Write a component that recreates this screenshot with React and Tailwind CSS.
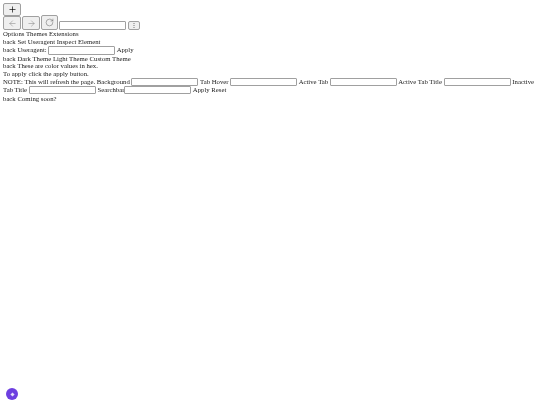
import React from 'react';
import { Plus, ArrowLeft, ArrowRight, RotateCw } from 'lucide-react';

const NavButton = ({ children, className = '' }) => (
  <button className={`inline-flex items-center justify-center rounded-[2px] border border-[#a0a0a0] bg-[#efefef] text-[#333] ${className}`}>
    {children}
  </button>
);

const Field = ({ className = '' }) => (
  <input type="text" className={`inline-block h-[8px] w-[67px] rounded-[1px] border border-[#a0a0a0] bg-white align-top ${className}`} />
);

export default function App() {
  return (
    <div className="relative h-[405px] w-[540px] overflow-hidden bg-white font-['Liberation_Serif',serif] text-[6.75px] leading-[7.75px] text-[#222] [will-change:transform]">
      <div className="px-[3px] pt-[3px]">
        <div className="flex">
          <NavButton className="h-[13px] w-[18px]"><Plus size={9} strokeWidth={1.75} className="text-black" /></NavButton>
        </div>
        <div className="flex h-[14px] items-end">
          <NavButton className="mr-[1px] h-[14px] w-[18px]"><ArrowLeft size={9} strokeWidth={1.25} className="text-[#777]" /></NavButton>
          <NavButton className="mr-[1px] h-[14px] w-[18px]"><ArrowRight size={9} strokeWidth={1.25} className="text-[#777]" /></NavButton>
          <NavButton className="mr-[1px] h-[15px] w-[17px]"><RotateCw size={9} strokeWidth={1.25} className="text-[#555]" /></NavButton>
          <Field className="h-[9px]" />
          <NavButton className="ml-[2px] h-[9px] w-[12px] text-[6px]">⋮</NavButton>
        </div>
        <div>Options Themes Extensions</div>
        <div>back Set Useragent Inspect Element</div>
        <div className="leading-[8.5px]">back Useragent: <Field className="h-[9px]" /> Apply</div>
        <div>back Dark Theme Light Theme Custom Theme</div>
        <div>back These are color values in hex.</div>
        <div>To apply click the apply button.</div>
        <div className="leading-[8.5px]">
          NOTE: This will refresh the page. Background <Field /> Tab Hover <Field /> Active Tab <Field /> Active Tab Title <Field /> Inactive Tab Title <Field /> Searchbar<Field /> Apply Reset
        </div>
        <div>back Coming soon?</div>
      </div>
      <button className="absolute bottom-[5px] left-[6px] flex h-[12px] w-[12px] items-center justify-center rounded-full bg-[#6d3fe0]">
        <span className="h-[3px] w-[3px] rotate-45 bg-[#e6e0fa]" />
      </button>
    </div>
  );
}
